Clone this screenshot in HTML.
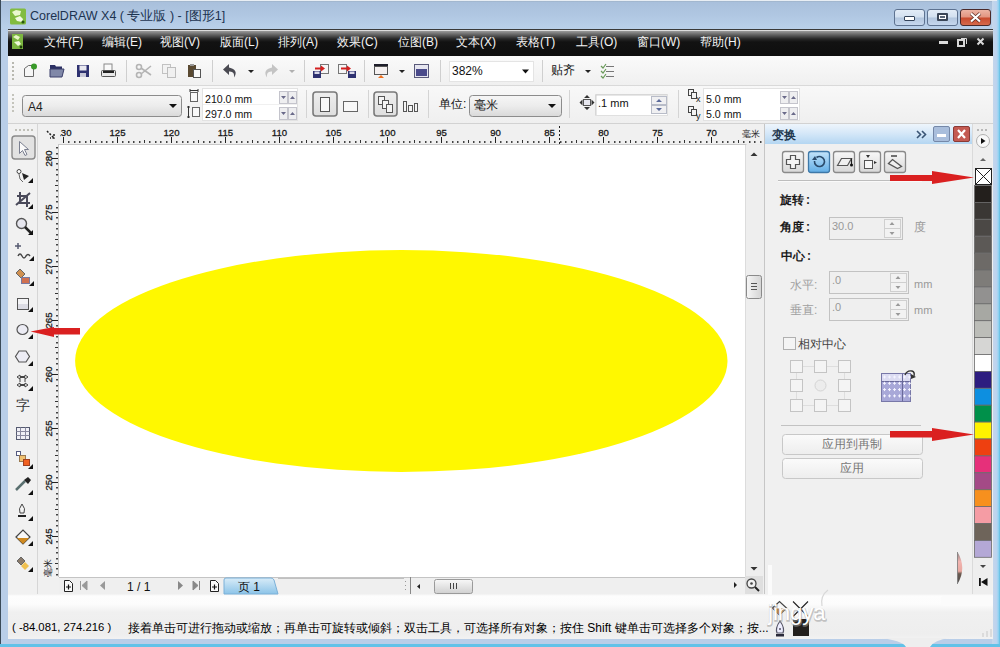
<!DOCTYPE html>
<html><head><meta charset="utf-8">
<style>
*{margin:0;padding:0;box-sizing:border-box}
html,body{width:1000px;height:647px;overflow:hidden}
body{position:relative;background:#b9cee8;font-family:"Liberation Sans",sans-serif;font-size:12px;color:#000}
.a{position:absolute}
.t{position:absolute;white-space:nowrap;line-height:1}
.sep{position:absolute;width:1px;background:#c8c8c8;border-right:1px solid #fff}
</style></head><body>
<!-- outer frame edges -->
<div class="a" style="left:0;top:0;width:1px;height:647px;background:#3a4a58"></div>
<div class="a" style="left:992px;top:0;width:8px;height:647px;background:linear-gradient(to right,#c6d7ea 0,#bcd3ef 55%,#9ad4f2 78%,#5cbde2 100%)"></div>
<div class="a" style="left:0;top:644px;width:1000px;height:3px;background:#62c2e8"></div>
<div class="a" style="left:1px;top:0;width:996px;height:1px;background:#e8eef4"></div>
<!-- title bar -->
<div class="a" style="left:1px;top:1px;width:991px;height:28px;background:linear-gradient(#9fb3c8 0,#a9c0dc 1.5px,#b0c7e2 50%,#b9d0ea 100%)"></div>
<svg class="a" style="left:0;top:0" width="60" height="56">
<rect x="10" y="8.5" width="16" height="16" rx="1.5" fill="#82bc40"/>
<path d="M12 12 l4 -2 l5 1 l-1 4 l-5 1z" fill="#eaf8d0"/>
<path d="M15 18 l5 -2 l3 3 l-1 3 l-5 -1z" fill="#f2fae0"/>
<circle cx="23" cy="22" r="1.6" fill="#2a5a10"/>
</svg>
<div class="t" style="left:30px;top:10px;font-size:12.5px;color:#1c3350">CorelDRAW X4 ( 专业版 ) - [图形1]</div>
<!-- window buttons -->
<div class="a" style="left:894px;top:9px;width:31px;height:17px;border:1px solid #5d7290;border-radius:3px;background:linear-gradient(#e2ecf7 0,#d2e0f0 48%,#b2c6de 52%,#c6d8ee 100%)"></div>
<div class="a" style="left:904px;top:16px;width:11px;height:5px;border:1px solid #33435a;border-radius:1px;background:#fff"></div>
<div class="a" style="left:927px;top:9px;width:31px;height:17px;border:1px solid #5d7290;border-radius:3px;background:linear-gradient(#e2ecf7 0,#d2e0f0 48%,#b2c6de 52%,#c6d8ee 100%)"></div>
<div class="a" style="left:937px;top:13px;width:11px;height:8px;border:2px solid #3a4658;border-radius:1px;background:#fff"></div><div class="a" style="left:940px;top:16px;width:5px;height:2px;background:#5a6678"></div>
<div class="a" style="left:960px;top:9px;width:31px;height:17px;border:1px solid #4a2a2a;border-radius:3px;background:linear-gradient(#ecb4a4 0,#e29480 48%,#c84a2e 52%,#d66a4a 100%)"></div>
<svg class="a" style="left:960px;top:9px" width="31" height="17"><path d="M11 4.5 l9 8 M20 4.5 l-9 8" stroke="#5a2a20" stroke-width="3.6"/><path d="M11 4.5 l9 8 M20 4.5 l-9 8" stroke="#fff" stroke-width="2.2"/></svg>

<!-- content bg -->
<div class="a" style="left:8px;top:29px;width:985px;height:610px;background:#f0f0f0"></div>
<!-- menu bar -->
<div class="a" style="left:8px;top:29px;width:985px;height:27px;background:linear-gradient(#3a3a3a 0,#3a3a3a 1px,#dcdcdc 1px,#dcdcdc 2px,#9a9a9a 2px,#5e5e5e 6px,#262626 10px,#121212 13px,#0e0e0e 100%)"></div>
<svg class="a" style="left:0;top:0" width="60" height="56">
<rect x="12" y="34" width="11" height="15" fill="#7cb640"/>
<path d="M13 37 l3 -2 l4 2 l-2 3z" fill="#e8f6c8"/>
<path d="M14 42 l5 -1 l2 3 l-3 2z" fill="#eef8d8"/>
<circle cx="21" cy="47" r="1.4" fill="#1e3e0a"/>
</svg>
<div class="t" style="left:44px;top:36px;color:#f4f4f4">文件(F)</div>
<div class="t" style="left:102px;top:36px;color:#f4f4f4">编辑(E)</div>
<div class="t" style="left:160px;top:36px;color:#f4f4f4">视图(V)</div>
<div class="t" style="left:220px;top:36px;color:#f4f4f4">版面(L)</div>
<div class="t" style="left:278px;top:36px;color:#f4f4f4">排列(A)</div>
<div class="t" style="left:337px;top:36px;color:#f4f4f4">效果(C)</div>
<div class="t" style="left:398px;top:36px;color:#f4f4f4">位图(B)</div>
<div class="t" style="left:456px;top:36px;color:#f4f4f4">文本(X)</div>
<div class="t" style="left:516px;top:36px;color:#f4f4f4">表格(T)</div>
<div class="t" style="left:576px;top:36px;color:#f4f4f4">工具(O)</div>
<div class="t" style="left:637px;top:36px;color:#f4f4f4">窗口(W)</div>
<div class="t" style="left:700px;top:36px;color:#f4f4f4">帮助(H)</div>
<div class="a" style="left:939px;top:41px;width:9px;height:3px;background:#ddd"></div>
<svg class="a" style="left:930px;top:30px" width="62" height="26"><rect x="28" y="10" width="6" height="6" fill="none" stroke="#d8d8d8" stroke-width="2"/><path d="M31 8.5 h5.5 v5.5" stroke="#d8d8d8" stroke-width="1" fill="none"/><path d="M47.5 8.5 l6 6 M53.5 8.5 l-6 6" stroke="#d8d8d8" stroke-width="2"/></svg>

<!-- toolbar 1 -->
<div class="a" style="left:8px;top:56px;width:985px;height:30px;background:linear-gradient(#fafafa,#f0f0f0);border-bottom:1px solid #d9d9d9"></div>
<!-- property bar -->
<div class="a" style="left:8px;top:86px;width:985px;height:38px;background:linear-gradient(#f8f8f8,#efefef);border-bottom:1px solid #d2d2d2"></div>
<!-- toolbox -->
<div class="a" style="left:8px;top:124px;width:30px;height:470px;background:#f1f1f1;border-right:1px solid #d6d6d6"></div>
<!-- rulers -->
<div class="a" style="left:38px;top:124px;width:726px;height:20px;background:#f2f2f2"></div>
<div class="a" style="left:38px;top:144px;width:21px;height:434px;background:#f2f2f2"></div>
<!-- canvas -->
<div class="a" style="left:59px;top:144px;width:687px;height:434px;background:#fff"></div>
<svg class="a" style="left:0;top:0" width="1000" height="647"><ellipse cx="401.3" cy="361" rx="326.2" ry="111" fill="#fff800"/></svg>
<!--RULER-->
<svg class="a" style="left:0;top:0" width="1000" height="647">
<defs><clipPath id="hr"><rect x="60" y="124" width="704" height="20"/></clipPath><clipPath id="vr"><rect x="38" y="144" width="21" height="433"/></clipPath></defs>
<rect x="38" y="124" width="726" height="20" fill="#f0f0f0"/>
<line x1="38" y1="144.5" x2="764" y2="144.5" stroke="#c8c8c8"/>
<g clip-path="url(#hr)">
<rect x="58" y="141" width="1.5" height="2" fill="#444"/>
<rect x="63" y="137" width="1" height="6" fill="#222"/>
<text x="63.5" y="135.5" text-anchor="middle" font-size="9.6" font-family="Liberation Sans" fill="#1a1a1a" stroke="#1a1a1a" stroke-width="0.3">130</text>
<rect x="68" y="141" width="1.5" height="2" fill="#444"/>
<rect x="74" y="141" width="1.5" height="2" fill="#444"/>
<rect x="79" y="141" width="1.5" height="2" fill="#444"/>
<rect x="85" y="141" width="1.5" height="2" fill="#444"/>
<rect x="90" y="140" width="1" height="3" fill="#333"/>
<rect x="95" y="141" width="1.5" height="2" fill="#444"/>
<rect x="101" y="141" width="1.5" height="2" fill="#444"/>
<rect x="106" y="141" width="1.5" height="2" fill="#444"/>
<rect x="112" y="141" width="1.5" height="2" fill="#444"/>
<rect x="117" y="137" width="1" height="6" fill="#222"/>
<text x="117.5" y="135.5" text-anchor="middle" font-size="9.6" font-family="Liberation Sans" fill="#1a1a1a" stroke="#1a1a1a" stroke-width="0.3">125</text>
<rect x="122" y="141" width="1.5" height="2" fill="#444"/>
<rect x="128" y="141" width="1.5" height="2" fill="#444"/>
<rect x="133" y="141" width="1.5" height="2" fill="#444"/>
<rect x="139" y="141" width="1.5" height="2" fill="#444"/>
<rect x="144" y="140" width="1" height="3" fill="#333"/>
<rect x="149" y="141" width="1.5" height="2" fill="#444"/>
<rect x="155" y="141" width="1.5" height="2" fill="#444"/>
<rect x="160" y="141" width="1.5" height="2" fill="#444"/>
<rect x="166" y="141" width="1.5" height="2" fill="#444"/>
<rect x="171" y="137" width="1" height="6" fill="#222"/>
<text x="171.5" y="135.5" text-anchor="middle" font-size="9.6" font-family="Liberation Sans" fill="#1a1a1a" stroke="#1a1a1a" stroke-width="0.3">120</text>
<rect x="176" y="141" width="1.5" height="2" fill="#444"/>
<rect x="182" y="141" width="1.5" height="2" fill="#444"/>
<rect x="187" y="141" width="1.5" height="2" fill="#444"/>
<rect x="193" y="141" width="1.5" height="2" fill="#444"/>
<rect x="198" y="140" width="1" height="3" fill="#333"/>
<rect x="203" y="141" width="1.5" height="2" fill="#444"/>
<rect x="209" y="141" width="1.5" height="2" fill="#444"/>
<rect x="214" y="141" width="1.5" height="2" fill="#444"/>
<rect x="220" y="141" width="1.5" height="2" fill="#444"/>
<rect x="225" y="137" width="1" height="6" fill="#222"/>
<text x="225.5" y="135.5" text-anchor="middle" font-size="9.6" font-family="Liberation Sans" fill="#1a1a1a" stroke="#1a1a1a" stroke-width="0.3">115</text>
<rect x="230" y="141" width="1.5" height="2" fill="#444"/>
<rect x="236" y="141" width="1.5" height="2" fill="#444"/>
<rect x="241" y="141" width="1.5" height="2" fill="#444"/>
<rect x="247" y="141" width="1.5" height="2" fill="#444"/>
<rect x="252" y="140" width="1" height="3" fill="#333"/>
<rect x="257" y="141" width="1.5" height="2" fill="#444"/>
<rect x="263" y="141" width="1.5" height="2" fill="#444"/>
<rect x="268" y="141" width="1.5" height="2" fill="#444"/>
<rect x="274" y="141" width="1.5" height="2" fill="#444"/>
<rect x="279" y="137" width="1" height="6" fill="#222"/>
<text x="279.5" y="135.5" text-anchor="middle" font-size="9.6" font-family="Liberation Sans" fill="#1a1a1a" stroke="#1a1a1a" stroke-width="0.3">110</text>
<rect x="284" y="141" width="1.5" height="2" fill="#444"/>
<rect x="290" y="141" width="1.5" height="2" fill="#444"/>
<rect x="295" y="141" width="1.5" height="2" fill="#444"/>
<rect x="301" y="141" width="1.5" height="2" fill="#444"/>
<rect x="306" y="140" width="1" height="3" fill="#333"/>
<rect x="311" y="141" width="1.5" height="2" fill="#444"/>
<rect x="317" y="141" width="1.5" height="2" fill="#444"/>
<rect x="322" y="141" width="1.5" height="2" fill="#444"/>
<rect x="328" y="141" width="1.5" height="2" fill="#444"/>
<rect x="333" y="137" width="1" height="6" fill="#222"/>
<text x="333.5" y="135.5" text-anchor="middle" font-size="9.6" font-family="Liberation Sans" fill="#1a1a1a" stroke="#1a1a1a" stroke-width="0.3">105</text>
<rect x="338" y="141" width="1.5" height="2" fill="#444"/>
<rect x="344" y="141" width="1.5" height="2" fill="#444"/>
<rect x="349" y="141" width="1.5" height="2" fill="#444"/>
<rect x="355" y="141" width="1.5" height="2" fill="#444"/>
<rect x="360" y="140" width="1" height="3" fill="#333"/>
<rect x="365" y="141" width="1.5" height="2" fill="#444"/>
<rect x="371" y="141" width="1.5" height="2" fill="#444"/>
<rect x="376" y="141" width="1.5" height="2" fill="#444"/>
<rect x="382" y="141" width="1.5" height="2" fill="#444"/>
<rect x="387" y="137" width="1" height="6" fill="#222"/>
<text x="387.5" y="135.5" text-anchor="middle" font-size="9.6" font-family="Liberation Sans" fill="#1a1a1a" stroke="#1a1a1a" stroke-width="0.3">100</text>
<rect x="392" y="141" width="1.5" height="2" fill="#444"/>
<rect x="398" y="141" width="1.5" height="2" fill="#444"/>
<rect x="403" y="141" width="1.5" height="2" fill="#444"/>
<rect x="409" y="141" width="1.5" height="2" fill="#444"/>
<rect x="414" y="140" width="1" height="3" fill="#333"/>
<rect x="419" y="141" width="1.5" height="2" fill="#444"/>
<rect x="425" y="141" width="1.5" height="2" fill="#444"/>
<rect x="430" y="141" width="1.5" height="2" fill="#444"/>
<rect x="436" y="141" width="1.5" height="2" fill="#444"/>
<rect x="441" y="137" width="1" height="6" fill="#222"/>
<text x="441.5" y="135.5" text-anchor="middle" font-size="9.6" font-family="Liberation Sans" fill="#1a1a1a" stroke="#1a1a1a" stroke-width="0.3">95</text>
<rect x="446" y="141" width="1.5" height="2" fill="#444"/>
<rect x="452" y="141" width="1.5" height="2" fill="#444"/>
<rect x="457" y="141" width="1.5" height="2" fill="#444"/>
<rect x="463" y="141" width="1.5" height="2" fill="#444"/>
<rect x="468" y="140" width="1" height="3" fill="#333"/>
<rect x="473" y="141" width="1.5" height="2" fill="#444"/>
<rect x="479" y="141" width="1.5" height="2" fill="#444"/>
<rect x="484" y="141" width="1.5" height="2" fill="#444"/>
<rect x="490" y="141" width="1.5" height="2" fill="#444"/>
<rect x="495" y="137" width="1" height="6" fill="#222"/>
<text x="495.5" y="135.5" text-anchor="middle" font-size="9.6" font-family="Liberation Sans" fill="#1a1a1a" stroke="#1a1a1a" stroke-width="0.3">90</text>
<rect x="500" y="141" width="1.5" height="2" fill="#444"/>
<rect x="506" y="141" width="1.5" height="2" fill="#444"/>
<rect x="511" y="141" width="1.5" height="2" fill="#444"/>
<rect x="517" y="141" width="1.5" height="2" fill="#444"/>
<rect x="522" y="140" width="1" height="3" fill="#333"/>
<rect x="527" y="141" width="1.5" height="2" fill="#444"/>
<rect x="533" y="141" width="1.5" height="2" fill="#444"/>
<rect x="538" y="141" width="1.5" height="2" fill="#444"/>
<rect x="544" y="141" width="1.5" height="2" fill="#444"/>
<rect x="549" y="137" width="1" height="6" fill="#222"/>
<text x="549.5" y="135.5" text-anchor="middle" font-size="9.6" font-family="Liberation Sans" fill="#1a1a1a" stroke="#1a1a1a" stroke-width="0.3">85</text>
<rect x="554" y="141" width="1.5" height="2" fill="#444"/>
<rect x="560" y="141" width="1.5" height="2" fill="#444"/>
<rect x="565" y="141" width="1.5" height="2" fill="#444"/>
<rect x="571" y="141" width="1.5" height="2" fill="#444"/>
<rect x="576" y="140" width="1" height="3" fill="#333"/>
<rect x="581" y="141" width="1.5" height="2" fill="#444"/>
<rect x="587" y="141" width="1.5" height="2" fill="#444"/>
<rect x="592" y="141" width="1.5" height="2" fill="#444"/>
<rect x="598" y="141" width="1.5" height="2" fill="#444"/>
<rect x="603" y="137" width="1" height="6" fill="#222"/>
<text x="603.5" y="135.5" text-anchor="middle" font-size="9.6" font-family="Liberation Sans" fill="#1a1a1a" stroke="#1a1a1a" stroke-width="0.3">80</text>
<rect x="608" y="141" width="1.5" height="2" fill="#444"/>
<rect x="614" y="141" width="1.5" height="2" fill="#444"/>
<rect x="619" y="141" width="1.5" height="2" fill="#444"/>
<rect x="625" y="141" width="1.5" height="2" fill="#444"/>
<rect x="630" y="140" width="1" height="3" fill="#333"/>
<rect x="635" y="141" width="1.5" height="2" fill="#444"/>
<rect x="641" y="141" width="1.5" height="2" fill="#444"/>
<rect x="646" y="141" width="1.5" height="2" fill="#444"/>
<rect x="652" y="141" width="1.5" height="2" fill="#444"/>
<rect x="657" y="137" width="1" height="6" fill="#222"/>
<text x="657.5" y="135.5" text-anchor="middle" font-size="9.6" font-family="Liberation Sans" fill="#1a1a1a" stroke="#1a1a1a" stroke-width="0.3">75</text>
<rect x="662" y="141" width="1.5" height="2" fill="#444"/>
<rect x="668" y="141" width="1.5" height="2" fill="#444"/>
<rect x="673" y="141" width="1.5" height="2" fill="#444"/>
<rect x="679" y="141" width="1.5" height="2" fill="#444"/>
<rect x="684" y="140" width="1" height="3" fill="#333"/>
<rect x="689" y="141" width="1.5" height="2" fill="#444"/>
<rect x="695" y="141" width="1.5" height="2" fill="#444"/>
<rect x="700" y="141" width="1.5" height="2" fill="#444"/>
<rect x="706" y="141" width="1.5" height="2" fill="#444"/>
<rect x="711" y="137" width="1" height="6" fill="#222"/>
<text x="711.5" y="135.5" text-anchor="middle" font-size="9.6" font-family="Liberation Sans" fill="#1a1a1a" stroke="#1a1a1a" stroke-width="0.3">70</text>
<rect x="716" y="141" width="1.5" height="2" fill="#444"/>
<rect x="722" y="141" width="1.5" height="2" fill="#444"/>
<rect x="727" y="141" width="1.5" height="2" fill="#444"/>
<rect x="733" y="141" width="1.5" height="2" fill="#444"/>
<rect x="738" y="140" width="1" height="3" fill="#333"/>
<rect x="743" y="141" width="1.5" height="2" fill="#444"/>
<rect x="749" y="141" width="1.5" height="2" fill="#444"/>
<rect x="754" y="141" width="1.5" height="2" fill="#444"/>
<rect x="760" y="141" width="1.5" height="2" fill="#444"/>
</g>
<path d="M559.5 126 V144" stroke="#222" stroke-dasharray="2 2"/><path d="M40 220.5 H59" stroke="#222" stroke-dasharray="2 2"/>
<rect x="38" y="144" width="21" height="433" fill="#f0f0f0"/>
<line x1="58.5" y1="144" x2="58.5" y2="577" stroke="#c8c8c8"/>
<g clip-path="url(#vr)">
<rect x="56" y="147" width="2" height="1.5" fill="#444"/>
<rect x="56" y="153" width="2" height="1.5" fill="#444"/>
<rect x="52" y="158" width="6" height="1" fill="#222"/>
<text transform="translate(51.5 158.5) rotate(-90)" text-anchor="middle" font-size="9.6" font-family="Liberation Sans" fill="#1a1a1a" stroke="#1a1a1a" stroke-width="0.3">280</text>
<rect x="56" y="163" width="2" height="1.5" fill="#444"/>
<rect x="56" y="169" width="2" height="1.5" fill="#444"/>
<rect x="56" y="174" width="2" height="1.5" fill="#444"/>
<rect x="56" y="180" width="2" height="1.5" fill="#444"/>
<rect x="55" y="185" width="3" height="1" fill="#333"/>
<rect x="56" y="190" width="2" height="1.5" fill="#444"/>
<rect x="56" y="196" width="2" height="1.5" fill="#444"/>
<rect x="56" y="201" width="2" height="1.5" fill="#444"/>
<rect x="56" y="207" width="2" height="1.5" fill="#444"/>
<rect x="52" y="212" width="6" height="1" fill="#222"/>
<text transform="translate(51.5 212.5) rotate(-90)" text-anchor="middle" font-size="9.6" font-family="Liberation Sans" fill="#1a1a1a" stroke="#1a1a1a" stroke-width="0.3">275</text>
<rect x="56" y="217" width="2" height="1.5" fill="#444"/>
<rect x="56" y="223" width="2" height="1.5" fill="#444"/>
<rect x="56" y="228" width="2" height="1.5" fill="#444"/>
<rect x="56" y="234" width="2" height="1.5" fill="#444"/>
<rect x="55" y="239" width="3" height="1" fill="#333"/>
<rect x="56" y="244" width="2" height="1.5" fill="#444"/>
<rect x="56" y="250" width="2" height="1.5" fill="#444"/>
<rect x="56" y="255" width="2" height="1.5" fill="#444"/>
<rect x="56" y="261" width="2" height="1.5" fill="#444"/>
<rect x="52" y="266" width="6" height="1" fill="#222"/>
<text transform="translate(51.5 266.5) rotate(-90)" text-anchor="middle" font-size="9.6" font-family="Liberation Sans" fill="#1a1a1a" stroke="#1a1a1a" stroke-width="0.3">270</text>
<rect x="56" y="271" width="2" height="1.5" fill="#444"/>
<rect x="56" y="277" width="2" height="1.5" fill="#444"/>
<rect x="56" y="282" width="2" height="1.5" fill="#444"/>
<rect x="56" y="288" width="2" height="1.5" fill="#444"/>
<rect x="55" y="293" width="3" height="1" fill="#333"/>
<rect x="56" y="298" width="2" height="1.5" fill="#444"/>
<rect x="56" y="304" width="2" height="1.5" fill="#444"/>
<rect x="56" y="309" width="2" height="1.5" fill="#444"/>
<rect x="56" y="315" width="2" height="1.5" fill="#444"/>
<rect x="52" y="320" width="6" height="1" fill="#222"/>
<text transform="translate(51.5 320.5) rotate(-90)" text-anchor="middle" font-size="9.6" font-family="Liberation Sans" fill="#1a1a1a" stroke="#1a1a1a" stroke-width="0.3">265</text>
<rect x="56" y="325" width="2" height="1.5" fill="#444"/>
<rect x="56" y="331" width="2" height="1.5" fill="#444"/>
<rect x="56" y="336" width="2" height="1.5" fill="#444"/>
<rect x="56" y="342" width="2" height="1.5" fill="#444"/>
<rect x="55" y="347" width="3" height="1" fill="#333"/>
<rect x="56" y="352" width="2" height="1.5" fill="#444"/>
<rect x="56" y="358" width="2" height="1.5" fill="#444"/>
<rect x="56" y="363" width="2" height="1.5" fill="#444"/>
<rect x="56" y="369" width="2" height="1.5" fill="#444"/>
<rect x="52" y="374" width="6" height="1" fill="#222"/>
<text transform="translate(51.5 374.5) rotate(-90)" text-anchor="middle" font-size="9.6" font-family="Liberation Sans" fill="#1a1a1a" stroke="#1a1a1a" stroke-width="0.3">260</text>
<rect x="56" y="379" width="2" height="1.5" fill="#444"/>
<rect x="56" y="385" width="2" height="1.5" fill="#444"/>
<rect x="56" y="390" width="2" height="1.5" fill="#444"/>
<rect x="56" y="396" width="2" height="1.5" fill="#444"/>
<rect x="55" y="401" width="3" height="1" fill="#333"/>
<rect x="56" y="406" width="2" height="1.5" fill="#444"/>
<rect x="56" y="412" width="2" height="1.5" fill="#444"/>
<rect x="56" y="417" width="2" height="1.5" fill="#444"/>
<rect x="56" y="423" width="2" height="1.5" fill="#444"/>
<rect x="52" y="428" width="6" height="1" fill="#222"/>
<text transform="translate(51.5 428.5) rotate(-90)" text-anchor="middle" font-size="9.6" font-family="Liberation Sans" fill="#1a1a1a" stroke="#1a1a1a" stroke-width="0.3">255</text>
<rect x="56" y="433" width="2" height="1.5" fill="#444"/>
<rect x="56" y="439" width="2" height="1.5" fill="#444"/>
<rect x="56" y="444" width="2" height="1.5" fill="#444"/>
<rect x="56" y="450" width="2" height="1.5" fill="#444"/>
<rect x="55" y="455" width="3" height="1" fill="#333"/>
<rect x="56" y="460" width="2" height="1.5" fill="#444"/>
<rect x="56" y="466" width="2" height="1.5" fill="#444"/>
<rect x="56" y="471" width="2" height="1.5" fill="#444"/>
<rect x="56" y="477" width="2" height="1.5" fill="#444"/>
<rect x="52" y="482" width="6" height="1" fill="#222"/>
<text transform="translate(51.5 482.5) rotate(-90)" text-anchor="middle" font-size="9.6" font-family="Liberation Sans" fill="#1a1a1a" stroke="#1a1a1a" stroke-width="0.3">250</text>
<rect x="56" y="487" width="2" height="1.5" fill="#444"/>
<rect x="56" y="493" width="2" height="1.5" fill="#444"/>
<rect x="56" y="498" width="2" height="1.5" fill="#444"/>
<rect x="56" y="504" width="2" height="1.5" fill="#444"/>
<rect x="55" y="509" width="3" height="1" fill="#333"/>
<rect x="56" y="514" width="2" height="1.5" fill="#444"/>
<rect x="56" y="520" width="2" height="1.5" fill="#444"/>
<rect x="56" y="525" width="2" height="1.5" fill="#444"/>
<rect x="56" y="531" width="2" height="1.5" fill="#444"/>
<rect x="52" y="536" width="6" height="1" fill="#222"/>
<text transform="translate(51.5 536.5) rotate(-90)" text-anchor="middle" font-size="9.6" font-family="Liberation Sans" fill="#1a1a1a" stroke="#1a1a1a" stroke-width="0.3">245</text>
<rect x="56" y="541" width="2" height="1.5" fill="#444"/>
<rect x="56" y="547" width="2" height="1.5" fill="#444"/>
<rect x="56" y="552" width="2" height="1.5" fill="#444"/>
<rect x="56" y="558" width="2" height="1.5" fill="#444"/>
<rect x="55" y="563" width="3" height="1" fill="#333"/>
<rect x="56" y="568" width="2" height="1.5" fill="#444"/>
<rect x="56" y="574" width="2" height="1.5" fill="#444"/>
</g>
<rect x="38" y="124" width="21" height="20" fill="#f0f0f0"/>
<path d="M47 131 l7 7 M54 134 v4 h-4" stroke="#222" stroke-width="1.5" fill="none" stroke-dasharray="2 1.5"/>
</svg>
<div class="t" style="left:742px;top:130px;font-size:9px;color:#222">毫米</div>
<div class="t" style="left:44px;top:577px;font-size:9px;color:#222;transform:rotate(-90deg);transform-origin:0 0">毫米</div>
<!--/RULER-->
<!-- vertical scrollbar -->
<div class="a" style="left:746px;top:144px;width:18px;height:434px;background:#ececec;border-left:1px solid #dcdcdc"></div>
<!-- page nav / hscroll -->
<div class="a" style="left:59px;top:577px;width:687px;height:17px;background:#ececec;border-top:1px solid #cfcfcf"></div>
<!-- status bar -->
<div class="a" style="left:8px;top:594px;width:985px;height:45px;background:linear-gradient(#f0f0f0 0,#fdfdfd 2px,#fcfcfc 10px,#f0f0f0 18px,#eeeeee 40px,#f2f2f2 45px)"></div>
<div class="t" style="left:12px;top:622px;font-size:11.3px">( -84.081, 274.216 )</div>
<div class="t" style="left:128px;top:622px;font-size:12px;font-weight:500">接着单击可进行拖动或缩放；再单击可旋转或倾斜；双击工具，可选择所有对象；按住 Shift 键单击可选择多个对象；按...</div>

<!-- toolbox icons -->
<svg class="a" style="left:0;top:0" width="60" height="600">
<g fill="#c0c0b8"><rect x="15" y="129" width="2" height="2"/><rect x="19" y="129" width="2" height="2"/><rect x="23" y="129" width="2" height="2"/><rect x="27" y="129" width="2" height="2"/><rect x="31" y="129" width="2" height="2"/></g>
<rect x="12" y="136" width="23" height="23" rx="3" fill="#e2e2e2" stroke="#8a8a8a" stroke-width="1.4"/>
<path d="M19.5 141.5 V153.5 L22.5 150.5 L25 155.5 L27 154.5 L24.5 149.5 H28.5 Z" fill="#fafafa" stroke="#7a7f90" stroke-width="1"/>
<!-- shape -->
<circle cx="19" cy="171.5" r="2" fill="#fff" stroke="#444"/>
<path d="M19 174 Q19 180 23 182" stroke="#666" fill="none"/>
<path d="M22 173 L29 176 L24 180z" fill="#222"/>
<path d="M28 183 h5 v-5z" fill="#111"/>
<!-- crop -->
<path d="M20 192 V203 H30 M17 196 H27 V207 M16 205 L30 193" stroke="#4a4a5a" stroke-width="2" fill="none"/>
<path d="M28 209 h5 v-5z" fill="#111"/>
<!-- zoom -->
<circle cx="21.5" cy="223.5" r="5" fill="#e6e6ee" stroke="#555" stroke-width="1.4"/>
<path d="M25 227 L31 233" stroke="#222" stroke-width="2.5"/>
<path d="M28 235 h5 v-5z" fill="#111"/>
<!-- freehand -->
<path d="M15 246 h6 M18 243 v6" stroke="#555a70" stroke-width="1.5"/>
<path d="M18 256 q2 -4 4 0 q2 4 4 0 q2 -3 4 0" stroke="#444" stroke-width="1.4" fill="none"/>
<path d="M29 261 h5 v-5z" fill="#111"/>
<!-- smart fill -->
<path d="M16 273 l4 -4 l5 5 l-4 4z" fill="#d09050" stroke="#666"/>
<rect x="21.5" y="277.5" width="8" height="6" fill="#d07050" stroke="#7a7aa0"/>
<path d="M29 286 h5 v-5z" fill="#111"/>
<!-- rectangle -->
<rect x="17.5" y="298.5" width="11" height="11" fill="#f4f4f6" stroke="#555"/>
<rect x="18" y="304" width="10" height="5" fill="#dcdce4"/>
<path d="M28 312 h5 v-5z" fill="#111"/>
<!-- ellipse -->
<ellipse cx="22.5" cy="329.5" rx="5.5" ry="5" fill="#ececf4" stroke="#555" stroke-width="1.2"/>
<path d="M28 339 h5 v-5z" fill="#111"/>
<!-- polygon -->
<path d="M19 351 h7 l3.5 5.5 l-3.5 5.5 h-7 l-3.5 -5.5z" fill="#ececf4" stroke="#555" stroke-width="1.2"/>
<path d="M28 366 h5 v-5z" fill="#111"/>
<!-- basic shapes -->
<path d="M17 377 l3 -2 v1.5 h5 v-1.5 l3 2 l-3 2 v-1.5 h-5 v1.5z M17 385 l3 -2 v1.5 h5 v-1.5 l3 2 l-3 2 v-1.5 h-5 v1.5z" fill="#f4f4f4" stroke="#444"/>
<path d="M20 379 v3 M25 379 v3" stroke="#444"/>
<path d="M28 391 h5 v-5z" fill="#111"/>
<!-- table -->
<rect x="16.5" y="427.5" width="13" height="12" fill="#f0f0f6" stroke="#555a70"/>
<path d="M16.5 431.5 h13 M16.5 435.5 h13 M20.5 427.5 v12 M25.5 427.5 v12" stroke="#8a8aa0"/>
<!-- interactive -->
<rect x="16.5" y="451.5" width="4" height="4" fill="#fff" stroke="#555a80"/>
<rect x="19.5" y="455.5" width="6" height="6" fill="#f0c070" stroke="#9a7a50"/>
<rect x="23.5" y="459.5" width="6" height="6" fill="#f06020" stroke="#a04020"/>
<path d="M28 469 h5 v-5z" fill="#111"/>
<!-- eyedropper -->
<path d="M16 490 L25 481" stroke="#5a7070" stroke-width="2.5"/>
<path d="M24 480 l4 -3 l3 3 l-3 4z" fill="#222"/>
<path d="M28 495 h5 v-5z" fill="#111"/>
<!-- outline pen -->
<path d="M22 504 q-4 5 -2 9 h4 q2 -4 -2 -9z" fill="#f4f4f4" stroke="#444"/>
<rect x="18" y="515" width="8" height="2" fill="#222"/>
<path d="M28 521 h5 v-5z" fill="#111"/>
<!-- fill -->
<path d="M16 537 l7 -7 l7 7 l-7 7z" fill="#f8f8f8" stroke="#444" stroke-width="1.2"/>
<path d="M17 538 h12 l-6 6z" fill="#d08a20"/>
<path d="M28 546 h5 v-5z" fill="#111"/>
<!-- interactive fill -->
<path d="M17 561 l4 -4 l4 4 l-4 4z" fill="#8a7a6a" stroke="#666"/>
<path d="M21 566 l4 -4 l4 4 l-4 4z" fill="#f0c050"/>
<path d="M28 572 h5 v-5z" fill="#111"/>
</svg>
<div class="t" style="left:16px;top:398px;font-size:14px;color:#333">字</div>
<!--TB-->

<svg class="a" style="left:0;top:0" width="1000" height="130">
<defs>
<linearGradient id="cg" x1="0" y1="0" x2="0" y2="1"><stop offset="0" stop-color="#f6f6f6"/><stop offset="0.5" stop-color="#ececec"/><stop offset="1" stop-color="#d9d9d9"/></linearGradient>
<linearGradient id="pg" x1="0" y1="0" x2="0" y2="1"><stop offset="0" stop-color="#eeeeee"/><stop offset="1" stop-color="#dedede"/></linearGradient>
</defs>
<g fill="#b8b8b0"><rect x="12" y="62" width="2" height="2"/><rect x="12" y="66" width="2" height="2"/><rect x="12" y="70" width="2" height="2"/><rect x="12" y="74" width="2" height="2"/><rect x="12" y="78" width="2" height="2"/></g>
<!-- new -->
<path d="M24.5 68.5 L28.5 65.5 H33.5 V76.5 H24.5 Z" fill="#f6f6f6" stroke="#6a6a6a"/>
<circle cx="34" cy="66.5" r="3" fill="#3a9a2a"/>
<!-- open -->
<path d="M50 65 h5 l1 1.5 h6 v3 H50z" fill="#2b2f63"/>
<path d="M50 69 h14 l-2 8 H50z" fill="#8088a8" stroke="#3a3f6a" stroke-width="1"/>
<!-- save -->
<rect x="77" y="65" width="12" height="12" fill="#2e3170"/>
<rect x="79.5" y="65.5" width="7" height="5" fill="#e8e8f0"/>
<rect x="80" y="73" width="6" height="4" fill="#c8c8d8"/>
<!-- print -->
<rect x="104" y="64" width="8" height="7" fill="#fafafa" stroke="#8a8a8a"/>
<rect x="101.5" y="70.5" width="14" height="6" rx="1" fill="#e8e8e8" stroke="#555"/>
<rect x="103" y="71" width="11" height="2" fill="#222"/>
<line x1="126.5" y1="60" x2="126.5" y2="82" stroke="#cfcfcf"/>
<!-- cut grey -->
<g stroke="#b4b4b4" stroke-width="1.6" fill="none"><circle cx="139" cy="67" r="2.5"/><circle cx="139" cy="75" r="2.5"/><path d="M141 68 L151 75 M141 74 L151 66"/></g>
<!-- copy grey -->
<rect x="162.5" y="64.5" width="8" height="9" fill="#f2f2f2" stroke="#c2c2c2"/>
<rect x="167.5" y="67.5" width="8" height="10" fill="#f0f0f0" stroke="#bdbdbd"/>
<!-- paste -->
<rect x="188" y="65" width="8" height="12" fill="#5a4a32"/>
<rect x="190" y="64" width="4" height="2" fill="#999"/>
<rect x="193.5" y="69.5" width="7" height="8" fill="#fafafa" stroke="#555"/>
<line x1="212.5" y1="60" x2="212.5" y2="82" stroke="#cfcfcf"/>
<!-- undo -->
<path d="M229 64 L223 69.5 L229 75 V71.5 Q235 71 234 77.5 Q239 70 229 67.5 Z" fill="#4a4a52"/>
<path d="M248 70 h6 l-3 3z" fill="#222"/>
<!-- redo grey -->
<path d="M272 64 L278 69.5 L272 75 V71.5 Q266 71 267 77.5 Q262 70 272 67.5 Z" fill="#c4c4c4"/>
<path d="M289 70 h6 l-3 3z" fill="#b0b0b0"/>
<line x1="304.5" y1="60" x2="304.5" y2="82" stroke="#cfcfcf"/>
<!-- import -->
<rect x="320.5" y="64.5" width="8" height="9" fill="#f6f6f6" stroke="#777"/>
<rect x="313" y="71" width="8" height="7" fill="#2e3170"/>
<rect x="314.5" y="71.5" width="5" height="2.5" fill="#d8d8e8"/>
<path d="M315 67.5 h6 v-2 l4 3 l-4 3 v-2 h-6z" fill="#d42020"/>
<!-- export -->
<rect x="338.5" y="64.5" width="8" height="9" fill="#f6f6f6" stroke="#777"/>
<rect x="348" y="71" width="8" height="7" fill="#2e3170"/>
<rect x="349.5" y="71.5" width="5" height="2.5" fill="#d8d8e8"/>
<path d="M341 67.5 h6 v-2 l4 3 l-4 3 v-2 h-6z" fill="#d42020"/>
<line x1="364.5" y1="60" x2="364.5" y2="82" stroke="#cfcfcf"/>
<!-- publish -->
<rect x="374" y="64" width="14" height="3" fill="#1e1e2a"/>
<rect x="374.5" y="66.5" width="13" height="8" fill="#f4f0f0" stroke="#555"/>
<path d="M378 78 l3 -3 l3 3z" fill="#f07020"/>
<path d="M399 70 h6 l-3 3z" fill="#222"/>
<!-- welcome -->
<rect x="414.5" y="64.5" width="14" height="13" fill="#e6e6f0" stroke="#5a5a7a"/>
<rect x="416" y="69" width="11" height="7" fill="#4a4a8a"/>
<line x1="440.5" y1="60" x2="440.5" y2="82" stroke="#cfcfcf"/>
<!-- zoom combo -->
<rect x="449.5" y="61.5" width="84" height="20" fill="#fff" stroke="#e4e4e4"/>
<path d="M522 69.5 h7 l-3.5 4z" fill="#111"/>
<line x1="542.5" y1="60" x2="542.5" y2="82" stroke="#cfcfcf"/>
<path d="M585 70 h6 l-3 3z" fill="#222"/>
<g stroke="#6a9a5a" stroke-width="1.2" fill="none"><path d="M601 66 l2 2 l3 -4 M601 71 l2 2 l3 -4 M601 76 l2 2 l3 -4"/></g>
<g stroke="#777" stroke-width="1"><path d="M606 66.5 h8 M606 71.5 h8 M606 76.5 h8"/></g>

<g fill="#c4c4bc"><rect x="12" y="94" width="2" height="2"/><rect x="12" y="98" width="2" height="2"/><rect x="12" y="102" width="2" height="2"/><rect x="12" y="106" width="2" height="2"/><rect x="12" y="110" width="2" height="2"/></g>
<rect x="22.5" y="95.5" width="159" height="21" rx="3" fill="url(#cg)" stroke="#8c8c8c"/>
<path d="M169 104 h8 l-4 4z" fill="#111"/>
<rect x="190.5" y="92.5" width="7" height="9" fill="#f8f8f8" stroke="#666"/>
<path d="M190 90.5 h8 M190 89 v3 M198 89 v3" stroke="#333" fill="none"/>
<rect x="192.5" y="107.5" width="7" height="9" fill="#f8f8f8" stroke="#666"/>
<path d="M188.5 106 v12 M187 107 h3 M187 117 h3" stroke="#333" fill="none"/>
<rect x="202.5" y="88.5" width="95" height="32" fill="#fff" stroke="#e2e2e2"/>
<line x1="203" y1="104.5" x2="297" y2="104.5" stroke="#f0f0f0"/>
<g fill="#eeeef0" stroke="#c4c4cc"><rect x="279.5" y="91.5" width="8" height="12"/><rect x="288.5" y="91.5" width="8" height="12"/><rect x="279.5" y="107.5" width="8" height="12"/><rect x="288.5" y="107.5" width="8" height="12"/></g>
<g fill="#6a6a8a"><path d="M281 96 h5 l-2.5 3z M281 112 h5 l-2.5 3z M290 99 h5 l-2.5 -3z M290 115 h5 l-2.5 -3z"/></g>
<line x1="306.5" y1="90" x2="306.5" y2="118" stroke="#d4d4d4"/>
<rect x="313" y="92" width="24" height="24" rx="3" fill="url(#pg)" stroke="#7a7a7a" stroke-width="1.6"/>
<rect x="320.5" y="97.5" width="9" height="14" fill="#f8f8f8" stroke="#555"/>
<rect x="343.5" y="101.5" width="14" height="10" fill="#f8f8f8" stroke="#666"/>
<line x1="368.5" y1="90" x2="368.5" y2="118" stroke="#d4d4d4"/>
<rect x="374" y="92" width="23" height="24" rx="3" fill="url(#pg)" stroke="#7a7a7a" stroke-width="1.6"/>
<rect x="378.5" y="96.5" width="6" height="8" fill="#f4f4f4" stroke="#555"/>
<rect x="382.5" y="100.5" width="6" height="8" fill="#f4f4f4" stroke="#555"/>
<rect x="386.5" y="104.5" width="6" height="8" fill="#f4f4f4" stroke="#555"/>
<rect x="403.5" y="101.5" width="3" height="10" fill="#f4f4f4" stroke="#555"/>
<rect x="408.5" y="105.5" width="4" height="6" fill="#f4f4f4" stroke="#555"/>
<rect x="414.5" y="103.5" width="3" height="8" fill="#f4f4f4" stroke="#555"/>
<line x1="428.5" y1="90" x2="428.5" y2="118" stroke="#d4d4d4"/>
<rect x="469.5" y="95.5" width="92" height="21" rx="3" fill="url(#cg)" stroke="#8c8c8c"/>
<path d="M548 104 h8 l-4 4z" fill="#111"/>
<line x1="569.5" y1="90" x2="569.5" y2="118" stroke="#d4d4d4"/>
<path d="M587 95 l-3 3 h6z M587 110 l-3 -3 h6z M579.5 102.5 l3 -3 v6z M594.5 102.5 l-3 -3 v6z" fill="#333"/>
<rect x="583.5" y="99.5" width="7" height="6" fill="#e8e8f0" stroke="#555"/>
<rect x="595.5" y="94.5" width="72" height="21" fill="#fff" stroke="#e0e0e0"/>
<path d="M596 115 V95 H667" stroke="#cfcfcf" fill="none"/>
<g fill="#f0f0f2" stroke="#b8bcc8"><rect x="651.5" y="96.5" width="15" height="8"/><rect x="651.5" y="105.5" width="15" height="8"/></g>
<path d="M656 102 h6 l-3 -3z M656 108 h6 l-3 3z" fill="#5a6a9a"/>
<line x1="678.5" y1="90" x2="678.5" y2="118" stroke="#d4d4d4"/>
<g fill="#f4f4f4" stroke="#444"><rect x="688.5" y="89.5" width="5" height="6"/><rect x="691.5" y="92.5" width="5" height="6"/><rect x="688.5" y="106.5" width="5" height="6"/><rect x="691.5" y="109.5" width="5" height="6"/></g>
<text x="696" y="102" font-size="9" font-family="Liberation Sans" fill="#222">x</text>
<text x="696" y="119" font-size="9" font-family="Liberation Sans" fill="#222">y</text>
<rect x="703.5" y="88.5" width="96" height="32" fill="#fff" stroke="#e2e2e2"/>
<g fill="#eeeef0" stroke="#c4c4cc"><rect x="780.5" y="91.5" width="8" height="12"/><rect x="789.5" y="91.5" width="8" height="12"/><rect x="780.5" y="107.5" width="8" height="12"/><rect x="789.5" y="107.5" width="8" height="12"/></g>
<g fill="#6a6a8a"><path d="M782 96 h5 l-2.5 3z M782 112 h5 l-2.5 3z M791 99 h5 l-2.5 -3z M791 115 h5 l-2.5 -3z"/></g>
</svg>
<div class="t" style="left:452px;top:65px;font-size:12px;color:#111">382%</div>
<div class="t" style="left:551px;top:64px;font-size:12px;color:#111">贴齐</div>
<div class="t" style="left:28px;top:101px;font-size:12px;color:#222">A4</div>
<div class="t" style="left:205px;top:94px;font-size:10.6px;color:#111">210.0 mm</div>
<div class="t" style="left:205px;top:109px;font-size:10.6px;color:#111">297.0 mm</div>
<div class="t" style="left:439px;top:98px;font-size:12px;color:#111">单位:</div>
<div class="t" style="left:474px;top:99px;font-size:12px;color:#111">毫米</div>
<div class="t" style="left:598px;top:98px;font-size:11px;color:#111">.1 mm</div>
<div class="t" style="left:706px;top:94px;font-size:10.6px;color:#111">5.0 mm</div>
<div class="t" style="left:706px;top:109px;font-size:10.6px;color:#111">5.0 mm</div>

<!--/TB-->
<!--DOCKER-->
<div class="a" style="left:764px;top:124px;width:209px;height:470px;background:#f0f0f0"></div>
<svg class="a" style="left:0;top:0" width="1000" height="647">
<defs>
<linearGradient id="dh" x1="0" y1="0" x2="0" y2="1"><stop offset="0" stop-color="#eef5fc"/><stop offset="0.45" stop-color="#d6e8f8"/><stop offset="1" stop-color="#b4d6f2"/></linearGradient>
<linearGradient id="db" x1="0" y1="0" x2="0" y2="1"><stop offset="0" stop-color="#f8f8f8"/><stop offset="1" stop-color="#d8d8d8"/></linearGradient>
<linearGradient id="dba" x1="0" y1="0" x2="0" y2="1"><stop offset="0" stop-color="#c4e4fa"/><stop offset="1" stop-color="#62aee6"/></linearGradient>
<linearGradient id="bt" x1="0" y1="0" x2="0" y2="1"><stop offset="0" stop-color="#fbfbfb"/><stop offset="1" stop-color="#ededed"/></linearGradient>
</defs>
<line x1="764.5" y1="124" x2="764.5" y2="594" stroke="#c6c6c6"/>
<rect x="765" y="124" width="207" height="20" fill="url(#dh)"/>
<path d="M917 131 l3.5 3.5 l-3.5 3.5 M922 131 l3.5 3.5 l-3.5 3.5" stroke="#3a5575" stroke-width="1.6" fill="none"/>
<rect x="933.5" y="126.5" width="16" height="15" rx="1.5" fill="#a9bedc" stroke="#7588a8"/>
<rect x="937" y="134" width="9" height="3" fill="#fff"/>
<rect x="953.5" y="126.5" width="16" height="15" rx="1.5" fill="#c45a52" stroke="#8a3a36"/>
<path d="M958 130 l7 8 M965 130 l-7 8" stroke="#fff" stroke-width="2.2"/>
<rect x="782.5" y="151.5" width="21" height="21" rx="2.5" fill="url(#db)" stroke="#8a8a8a" stroke-width="1.3"/>
<rect x="808.5" y="151.5" width="21" height="21" rx="2.5" fill="url(#dba)" stroke="#3e78a8" stroke-width="1.3"/>
<rect x="833.5" y="151.5" width="21" height="21" rx="2.5" fill="url(#db)" stroke="#8a8a8a" stroke-width="1.3"/>
<rect x="859.5" y="151.5" width="21" height="21" rx="2.5" fill="url(#db)" stroke="#8a8a8a" stroke-width="1.3"/>
<rect x="884.5" y="151.5" width="21" height="21" rx="2.5" fill="url(#db)" stroke="#8a8a8a" stroke-width="1.3"/>
<path d="M790.5 155.5 h5 v4 h4 v5 h-4 v4 h-5 v-4 h-4 v-5 h4z" fill="#f4f4f4" stroke="#555" stroke-width="1.2"/>
<path d="M814.5 161 a5 5 0 1 0 2 -3.5" stroke="#2a4a6a" stroke-width="1.6" fill="none"/><path d="M812 160 l3 -4 l2 4z" fill="#2a4a6a"/>
<path d="M837.5 165.5 l4 -7 h10 l-4 7z" fill="#f0f0f0" stroke="#555" stroke-width="1.2"/><path d="M851.5 158.5 v6" stroke="#222" stroke-width="1.2"/><circle cx="851.5" cy="165" r="1.5" fill="#111"/>
<rect x="864.5" y="160.5" width="8" height="8" fill="#f8f8f8" stroke="#555"/><path d="M866 155 h4 l-2 3z M874 164 v-3 l3 1.5z" fill="#333"/>
<path d="M888.5 163.5 l4 -4 l9 7 l-4 2z" fill="#f0f0f0" stroke="#555" stroke-width="1.3"/><path d="M891 156 h6" stroke="#444" stroke-width="1.5"/>
<line x1="778" y1="180.5" x2="922" y2="180.5" stroke="#bdbdbd"/><line x1="778" y1="181.5" x2="922" y2="181.5" stroke="#fafafa"/>
<rect x="829.5" y="217.5" width="73" height="22" fill="#efefef" stroke="#c2c2c2"/>
<rect x="884.5" y="219.5" width="16" height="18" fill="#f2f2f2" stroke="#cfcfcf"/>
<line x1="884" y1="228.5" x2="900" y2="228.5" stroke="#cfcfcf"/>
<path d="M889.5 225.0 h5 l-2.5 -3z M889.5 232.0 h5 l-2.5 3z" fill="#9a9a9a"/>
<rect x="829.5" y="271.5" width="79" height="22" fill="#efefef" stroke="#c2c2c2"/>
<rect x="890.5" y="273.5" width="16" height="18" fill="#f2f2f2" stroke="#cfcfcf"/>
<line x1="890" y1="282.5" x2="906" y2="282.5" stroke="#cfcfcf"/>
<path d="M895.5 279.0 h5 l-2.5 -3z M895.5 286.0 h5 l-2.5 3z" fill="#9a9a9a"/>
<rect x="829.5" y="298.5" width="79" height="22" fill="#efefef" stroke="#c2c2c2"/>
<rect x="890.5" y="300.5" width="16" height="18" fill="#f2f2f2" stroke="#cfcfcf"/>
<line x1="890" y1="309.5" x2="906" y2="309.5" stroke="#cfcfcf"/>
<path d="M895.5 306.0 h5 l-2.5 -3z M895.5 313.0 h5 l-2.5 3z" fill="#9a9a9a"/>
<rect x="783.5" y="337.5" width="12" height="12" fill="#f4f4f4" stroke="#b0b0b0"/>
<rect x="790.5" y="360.5" width="12" height="12" fill="#f4f4f4" stroke="#c4c4c4"/>
<rect x="814.5" y="360.5" width="12" height="12" fill="#f4f4f4" stroke="#c4c4c4"/>
<rect x="838.5" y="360.5" width="12" height="12" fill="#f4f4f4" stroke="#c4c4c4"/>
<rect x="790.5" y="379.5" width="12" height="12" fill="#f4f4f4" stroke="#c4c4c4"/>
<circle cx="820.5" cy="385.5" r="5.5" fill="#ececec" stroke="#d4d4d4"/>
<rect x="838.5" y="379.5" width="12" height="12" fill="#f4f4f4" stroke="#c4c4c4"/>
<rect x="790.5" y="399.5" width="12" height="12" fill="#f4f4f4" stroke="#c4c4c4"/>
<rect x="814.5" y="399.5" width="12" height="12" fill="#f4f4f4" stroke="#c4c4c4"/>
<rect x="838.5" y="399.5" width="12" height="12" fill="#f4f4f4" stroke="#c4c4c4"/>
<path d="M803 366.5 h11 M827 366.5 h11 M803 405.5 h11 M827 405.5 h11 M796.5 373 v6 M796.5 392 v7 M844.5 373 v6 M844.5 392 v7" stroke="#dedede"/>
<rect x="881.5" y="373.5" width="29" height="28" fill="#a8a8d8" stroke="#7878a8"/>
<rect x="882" y="374" width="28" height="7" fill="#dcdcf2"/>
<path d="M881.5 381.5 h29 M902.5 373.5 v28" stroke="#6a6a9a"/>
<g stroke="#f4f4ff" stroke-width="1"><path d="M883.0 377.0 h3 M884.5 375.5 v3"/><path d="M883.0 383.3 h3 M884.5 381.8 v3"/><path d="M883.0 389.6 h3 M884.5 388.1 v3"/><path d="M883.0 395.9 h3 M884.5 394.4 v3"/><path d="M888.0 377.0 h3 M889.5 375.5 v3"/><path d="M888.0 383.3 h3 M889.5 381.8 v3"/><path d="M888.0 389.6 h3 M889.5 388.1 v3"/><path d="M888.0 395.9 h3 M889.5 394.4 v3"/><path d="M893.0 377.0 h3 M894.5 375.5 v3"/><path d="M893.0 383.3 h3 M894.5 381.8 v3"/><path d="M893.0 389.6 h3 M894.5 388.1 v3"/><path d="M893.0 395.9 h3 M894.5 394.4 v3"/><path d="M898.0 377.0 h3 M899.5 375.5 v3"/><path d="M898.0 383.3 h3 M899.5 381.8 v3"/><path d="M898.0 389.6 h3 M899.5 388.1 v3"/><path d="M898.0 395.9 h3 M899.5 394.4 v3"/><path d="M903.0 377.0 h3 M904.5 375.5 v3"/><path d="M903.0 383.3 h3 M904.5 381.8 v3"/><path d="M903.0 389.6 h3 M904.5 388.1 v3"/><path d="M903.0 395.9 h3 M904.5 394.4 v3"/><path d="M908.0 377.0 h3 M909.5 375.5 v3"/><path d="M908.0 383.3 h3 M909.5 381.8 v3"/><path d="M908.0 389.6 h3 M909.5 388.1 v3"/><path d="M908.0 395.9 h3 M909.5 394.4 v3"/></g>
<path d="M905 375 q2 -5 7 -4 q3 1 2 5" stroke="#333" stroke-width="1.4" fill="none"/><path d="M911 374 l5 3 l-5 2z" fill="#333"/>
<line x1="781" y1="425.5" x2="921" y2="425.5" stroke="#c2c2c2"/>
<rect x="782.5" y="434.5" width="140" height="20" rx="3" fill="url(#bt)" stroke="#c8c8c8"/>
<rect x="782.5" y="458.5" width="140" height="20" rx="3" fill="url(#bt)" stroke="#c8c8c8"/>
<rect x="972" y="124" width="20" height="470" fill="#eeeeee"/>
<line x1="972.5" y1="124" x2="972.5" y2="594" stroke="#dadada"/>
<g fill="#b8b8b8"><rect x="977" y="129" width="2" height="2"/><rect x="981" y="129" width="2" height="2"/><rect x="985" y="129" width="2" height="2"/></g>
<circle cx="983" cy="141" r="6.5" fill="#f8f8f8" stroke="#b0b0b0"/><path d="M981 138 l4.5 3 l-4.5 3z" fill="#111"/>
<path d="M980 161 h6 l-3 -3z" fill="#666"/>
<rect x="975.5" y="168.5" width="16" height="16" fill="#fff" stroke="#222"/><path d="M976 169 l15 15 M991 169 l-15 15" stroke="#222"/>
<rect x="974.5" y="185.5" width="17" height="16.9" fill="#231f1c" stroke="#6a6a6a" stroke-width="0.8"/>
<rect x="974.5" y="202.4" width="17" height="16.9" fill="#3a3734" stroke="#6a6a6a" stroke-width="0.8"/>
<rect x="974.5" y="219.3" width="17" height="16.9" fill="#4b4845" stroke="#6a6a6a" stroke-width="0.8"/>
<rect x="974.5" y="236.2" width="17" height="16.9" fill="#5c5956" stroke="#6a6a6a" stroke-width="0.8"/>
<rect x="974.5" y="253.1" width="17" height="16.9" fill="#6d6a67" stroke="#6a6a6a" stroke-width="0.8"/>
<rect x="974.5" y="270.0" width="17" height="16.9" fill="#7e7c79" stroke="#6a6a6a" stroke-width="0.8"/>
<rect x="974.5" y="286.9" width="17" height="16.9" fill="#929190" stroke="#6a6a6a" stroke-width="0.8"/>
<rect x="974.5" y="303.8" width="17" height="16.9" fill="#a7a8a3" stroke="#6a6a6a" stroke-width="0.8"/>
<rect x="974.5" y="320.7" width="17" height="16.9" fill="#bcbdb8" stroke="#6a6a6a" stroke-width="0.8"/>
<rect x="974.5" y="337.6" width="17" height="16.9" fill="#d6d6d4" stroke="#6a6a6a" stroke-width="0.8"/>
<rect x="974.5" y="354.5" width="17" height="16.9" fill="#ffffff" stroke="#6a6a6a" stroke-width="0.8"/>
<rect x="974.5" y="371.4" width="17" height="16.9" fill="#2d1d80" stroke="#6a6a6a" stroke-width="0.8"/>
<rect x="974.5" y="388.3" width="17" height="16.9" fill="#0d8fe0" stroke="#6a6a6a" stroke-width="0.8"/>
<rect x="974.5" y="405.2" width="17" height="16.9" fill="#00904a" stroke="#6a6a6a" stroke-width="0.8"/>
<rect x="974.5" y="422.1" width="17" height="16.9" fill="#fff200" stroke="#6a6a6a" stroke-width="0.8"/>
<rect x="974.5" y="439.0" width="17" height="16.9" fill="#ee4010" stroke="#6a6a6a" stroke-width="0.8"/>
<rect x="974.5" y="455.9" width="17" height="16.9" fill="#e6307a" stroke="#6a6a6a" stroke-width="0.8"/>
<rect x="974.5" y="472.8" width="17" height="16.9" fill="#a44a86" stroke="#6a6a6a" stroke-width="0.8"/>
<rect x="974.5" y="489.7" width="17" height="16.9" fill="#f7901e" stroke="#6a6a6a" stroke-width="0.8"/>
<rect x="974.5" y="506.6" width="17" height="16.9" fill="#f59ca4" stroke="#6a6a6a" stroke-width="0.8"/>
<rect x="974.5" y="523.5" width="17" height="16.9" fill="#6e645a" stroke="#6a6a6a" stroke-width="0.8"/>
<rect x="974.5" y="540.4" width="17" height="16.9" fill="#b4a8d6" stroke="#6a6a6a" stroke-width="0.8"/>
<path d="M980 565 h6 l-3 3z" fill="#444"/>
<rect x="979" y="578" width="1.8" height="8" fill="#111"/><path d="M987.5 578 l-6.5 4 l6.5 4z" fill="#111"/>
<path d="M890 175 H932 V171 L974 177.5 L932 184 V181 H890z" fill="#da2020"/>
<path d="M890 431 H932 V428 L974 434.5 L932 441 V437.5 H890z" fill="#da2020"/>
<path d="M80 328 H54 V327 L30.5 331.5 L54 337 V334.5 H80z" fill="#da2020"/>
</svg>
<div class="t" style="left:772px;top:129px;font-size:12px;font-weight:bold;color:#22384e">变换</div>
<div class="t" style="left:780px;top:194px;font-size:12px;font-weight:bold;color:#1a1a1a">旋转<span style="margin-left:2px">:</span></div>
<div class="t" style="left:780px;top:221px;font-size:12px;font-weight:bold;color:#1a1a1a">角度<span style="margin-left:2px">:</span></div>
<div class="t" style="left:832px;top:221px;font-size:11px;color:#999">30.0</div>
<div class="t" style="left:914px;top:221px;font-size:12px;color:#999">度</div>
<div class="t" style="left:781px;top:250px;font-size:12px;font-weight:bold;color:#1a1a1a">中心<span style="margin-left:2px">:</span></div>
<div class="t" style="left:790px;top:279px;font-size:12px;color:#a0a0a0">水平:</div>
<div class="t" style="left:832px;top:275px;font-size:11px;color:#999">.0</div>
<div class="t" style="left:914px;top:279px;font-size:11px;color:#999">mm</div>
<div class="t" style="left:790px;top:304px;font-size:12px;color:#a0a0a0">垂直:</div>
<div class="t" style="left:832px;top:302px;font-size:11px;color:#999">.0</div>
<div class="t" style="left:914px;top:305px;font-size:11px;color:#999">mm</div>
<div class="t" style="left:798px;top:338px;font-size:12px;color:#444">相对中心</div>
<div class="t" style="left:822px;top:438px;font-size:12px;color:#777">应用到再制</div>
<div class="t" style="left:840px;top:462px;font-size:12px;color:#777">应用</div>
<!--/DOCKER-->
<!--BOTTOM-->
<svg class="a" style="left:0;top:0" width="1000" height="647">
<defs>
<linearGradient id="th" x1="0" y1="0" x2="1" y2="0"><stop offset="0" stop-color="#f6f6f6"/><stop offset="1" stop-color="#d4d4d4"/></linearGradient>
<linearGradient id="tv" x1="0" y1="0" x2="0" y2="1"><stop offset="0" stop-color="#f8f8f8"/><stop offset="1" stop-color="#d0d0d0"/></linearGradient>
<linearGradient id="tab" x1="0" y1="0" x2="0" y2="1"><stop offset="0" stop-color="#d8ecf8"/><stop offset="1" stop-color="#8cc4e8"/></linearGradient>
</defs>
<rect x="745" y="145" width="19" height="432" fill="#eeeeee"/>
<line x1="745.5" y1="145" x2="745.5" y2="577" stroke="#dcdcdc"/>
<path d="M750.5 156 l3.5 -3.5 l3.5 3.5z" fill="#333"/>
<rect x="746.5" y="275.5" width="15" height="23" rx="2" fill="url(#th)" stroke="#8a8a8a"/>
<path d="M751 283.5 h6 M751 286.5 h6 M751 289.5 h6" stroke="#555" stroke-width="1.2"/>
<path d="M750.5 567 h7 l-3.5 3.5z" fill="#333"/>
<rect x="59" y="577" width="705" height="17" fill="#efefef"/>
<line x1="59" y1="577.5" x2="745" y2="577.5" stroke="#c4c4c4"/>
<path d="M64.5 580.5 h5 l3 3 v8 h-8z" fill="#fafafa" stroke="#222"/><path d="M66 587 h5 M68.5 584.5 v5" stroke="#111" stroke-width="1.2"/>
<path d="M210.5 580.5 h5 l3 3 v8 h-8z" fill="#fafafa" stroke="#222"/><path d="M212 587 h5 M214.5 584.5 v5" stroke="#111" stroke-width="1.2"/>
<path d="M80.5 581 v9 M87 581 l-5 4.5 l5 4.5z" stroke="#999" fill="#999"/>
<path d="M105 581 l-5 4.5 l5 4.5z" fill="#999"/>
<path d="M178 581 l5 4.5 l-5 4.5z" fill="#888"/>
<path d="M199.5 581 v9 M193 581 l5 4.5 l-5 4.5z" stroke="#888" fill="#888"/>
<path d="M224 594 V580 Q224 578 226 578 H271 Q273 578 274 580 L278 594z" fill="url(#tab)" stroke="#7ab0d8"/>
<line x1="278" y1="578.5" x2="404" y2="578.5" stroke="#c0c0c0"/>
<g fill="#999"><rect x="405" y="581" width="1" height="1"/><rect x="405" y="585" width="1" height="1"/><rect x="405" y="589" width="1" height="1"/></g>
<line x1="410.5" y1="577" x2="410.5" y2="594" stroke="#888"/>
<path d="M420 584 l-3 2.5 l3 2.5z" fill="#222"/>
<rect x="434.5" y="579.5" width="38" height="14" rx="2" fill="url(#tv)" stroke="#9a9a9a"/>
<path d="M450.5 583 v6 M453.5 583 v6 M456.5 583 v6" stroke="#444"/>
<path d="M734 582 l3 3 l-3 3z" fill="#222"/>
<rect x="745" y="576" width="18" height="18" fill="#dfdfdf"/>
<circle cx="751.5" cy="583.5" r="4.5" fill="#f0f0f0" stroke="#444" stroke-width="1.3"/><circle cx="751.5" cy="583.5" r="1.3" fill="#444"/><path d="M755 587 l4 4" stroke="#222" stroke-width="2"/>
<rect x="768" y="565" width="4" height="30" fill="#fbfbfb"/>
<path d="M772.5 608 l7 -6.5 l7 6.5 l-7 7z" fill="#f8f8f8" stroke="#444" stroke-width="1.2"/><path d="M773 608.5 h13 l-6.5 6.5z" fill="#c08038"/>
<rect x="793" y="601.5" width="15" height="15" fill="#fbfbfb"/><path d="M793 601.5 l15 15 M808 601.5 l-15 15" stroke="#222" stroke-width="1.1"/>
<path d="M780 621 q-5 7 -3 12 h6 q2 -5 -3 -12z" fill="#eef" stroke="#556" stroke-width="1.1"/><circle cx="780" cy="629" r="1" fill="#556"/><rect x="776" y="634" width="8" height="2.5" fill="#2a2a3a"/>
<rect x="793" y="619" width="16" height="17" fill="#231f1c"/>
<rect x="941" y="596" width="52" height="10" rx="3" fill="#fbfbfb"/>
<defs><linearGradient id="lens" x1="0" y1="0" x2="0" y2="1"><stop offset="0" stop-color="#8a8080"/><stop offset="0.3" stop-color="#f2b4b0"/><stop offset="0.6" stop-color="#e8a8a0"/><stop offset="0.68" stop-color="#6a5a50"/><stop offset="1" stop-color="#505050"/></linearGradient></defs><path d="M957.5 552 Q967 568 957.5 584 Z" fill="url(#lens)"/><line x1="957.5" y1="552" x2="957.5" y2="584" stroke="#777" stroke-width="0.8"/>
<path d="M983 637 v-4 M987 637 v-6 M991 637 v-8" stroke="#c8c8c8"/>
<path d="M878 638 Q902 640 906 647 H930 Q934 640 950 638 Z" fill="#eeeeee"/>
<text x="768.5" y="620.5" font-size="22" font-family="Liberation Sans" fill="none" stroke="#9a9a9a" stroke-width="1.6" stroke-opacity="0.55">jingya</text><text x="768" y="620" font-size="22" font-family="Liberation Sans" fill="#ffffff">jingya</text><path d="M822 606 q-2 -10 6 -16" stroke="#d8d8d8" stroke-width="1.2" fill="none"/>
</svg>
<!--/BOTTOM-->
<div class="t" style="left:127px;top:581px;font-size:12px;color:#111">1 / 1</div>
<div class="t" style="left:238px;top:581px;font-size:12px;color:#111">页 1</div>

</body></html>
